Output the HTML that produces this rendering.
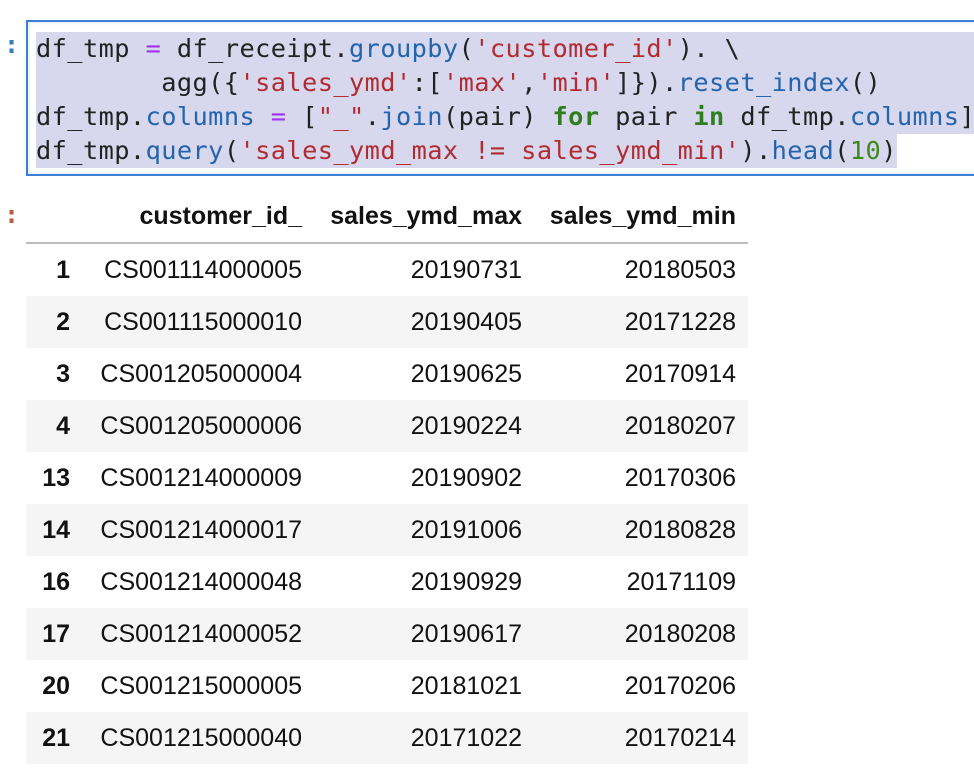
<!DOCTYPE html>
<html><head><meta charset="utf-8"><style>
html,body{margin:0;width:974px;height:778px;overflow:hidden;}
body{background:#fff;position:relative;font-family:"Liberation Sans",sans-serif;}
.p1{position:absolute;left:4px;top:30px;color:#307fc1;font:bold 25px "DejaVu Sans Mono",monospace;}
.p2{position:absolute;left:4px;top:200px;color:#bf5b3d;font:bold 25px "DejaVu Sans Mono",monospace;}
.wrap{position:absolute;left:0;top:0;width:974px;height:200px;overflow:hidden;}
.code{position:absolute;left:26px;top:20px;width:960px;height:156px;border:2px solid #3b7fd4;box-sizing:border-box;box-shadow:inset 0 0 4px #cfe0f5;}
.pre{position:absolute;left:36px;top:32px;width:938px;margin:0;font:25.3px/34px "DejaVu Sans Mono",monospace;color:#222;letter-spacing:0.42px;white-space:pre;}
.ln{display:block;background:#d7d7ee;height:34px;}
.ln.last{display:inline-block;}
.k{color:#a333ea;}.f{color:#2364ad;}.s{color:#b22b31;}.g{color:#2f7d1e;font-weight:bold;}.n{color:#3d8a1a;}
table{position:absolute;left:26px;top:190px;border-collapse:collapse;font-size:25px;color:#111;width:722px;}
th{font-weight:bold;text-align:right;height:52px;padding:0 12px 0 0;box-sizing:border-box;}
thead th{border-bottom:2px solid #bdbdbd;height:53px;}
td{text-align:right;height:52px;padding:0 12px 0 0;}
tbody tr:nth-child(even){background:#f5f5f5;}
</style></head><body>
<div class="p1">:</div>
<div class="p2">:</div>
<div class="wrap">
<div class="code"></div>
<div class="pre"><span class="ln">df_tmp <span class="k">=</span> df_receipt.<span class="f">groupby</span>(<span class="s">'customer_id'</span>). \</span><span class="ln">        agg({<span class="s">'sales_ymd'</span>:[<span class="s">'max'</span>,<span class="s">'min'</span>]}).<span class="f">reset_index</span>()</span><span class="ln">df_tmp.<span class="f">columns</span> <span class="k">=</span> [<span class="s">"_"</span>.<span class="f">join</span>(pair) <span class="g">for</span> pair <span class="g">in</span> df_tmp.<span class="f">columns</span>]</span><span class="ln last">df_tmp.<span class="f">query</span>(<span class="s">'sales_ymd_max != sales_ymd_min'</span>).<span class="f">head</span>(<span class="n">10</span>)</span></div>
</div>
<table>
<thead><tr><th style="width:56px"></th><th style="width:232px">customer_id_</th><th style="width:220px">sales_ymd_max</th><th style="width:214px">sales_ymd_min</th></tr></thead>
<tbody>
<tr><th>1</th><td>CS001114000005</td><td>20190731</td><td>20180503</td></tr>
<tr><th>2</th><td>CS001115000010</td><td>20190405</td><td>20171228</td></tr>
<tr><th>3</th><td>CS001205000004</td><td>20190625</td><td>20170914</td></tr>
<tr><th>4</th><td>CS001205000006</td><td>20190224</td><td>20180207</td></tr>
<tr><th>13</th><td>CS001214000009</td><td>20190902</td><td>20170306</td></tr>
<tr><th>14</th><td>CS001214000017</td><td>20191006</td><td>20180828</td></tr>
<tr><th>16</th><td>CS001214000048</td><td>20190929</td><td>20171109</td></tr>
<tr><th>17</th><td>CS001214000052</td><td>20190617</td><td>20180208</td></tr>
<tr><th>20</th><td>CS001215000005</td><td>20181021</td><td>20170206</td></tr>
<tr><th>21</th><td>CS001215000040</td><td>20171022</td><td>20170214</td></tr>
</tbody></table>
</body></html>
